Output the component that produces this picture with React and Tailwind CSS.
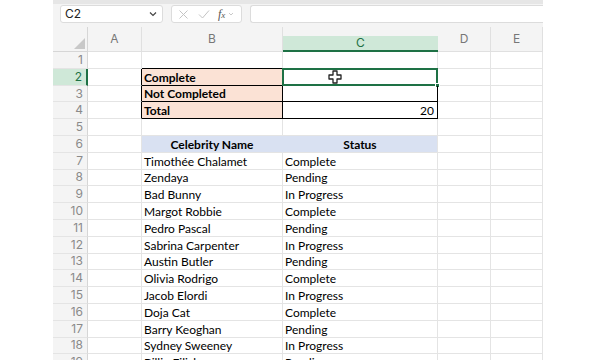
import React from "react";

const cols = ["A", "B", "C", "D", "E"];
const colW = ["w-[54px]", "w-[141px]", "w-[155px]", "w-[53px]", "w-[52px]"];

const people = [
  ["Timothée Chalamet", "Complete"],
  ["Zendaya", "Pending"],
  ["Bad Bunny", "In Progress"],
  ["Margot Robbie", "Complete"],
  ["Pedro Pascal", "Pending"],
  ["Sabrina Carpenter", "In Progress"],
  ["Austin Butler", "Pending"],
  ["Olivia Rodrigo", "Complete"],
  ["Jacob Elordi", "In Progress"],
  ["Doja Cat", "Complete"],
  ["Barry Keoghan", "Pending"],
  ["Sydney Sweeney", "In Progress"],
  ["Billie Eilish", "Pending"],
];

const grid = "border-[#e4e4e4]";

function Cell({ w, className = "", children }) {
  return (
    <div
      className={`${w} h-full shrink-0 border-r border-b ${grid} px-[2px] flex items-end leading-[15px] whitespace-nowrap overflow-hidden ${className}`}
    >
      {children}
    </div>
  );
}

function Row({ n, selected, cells }) {
  return (
    <div className="flex h-[16.8px]">
      <div
        className={`w-[35px] shrink-0 flex items-center justify-end pr-[4px] border-b border-[#e4e4e4] text-[12px] ${
          selected
            ? "bg-[#cfe8d8] text-[#1e7145] border-r-2 border-r-[#1e7145]"
            : "bg-[#f4f4f4] text-[#8a8a8a] border-r border-r-[#d6d6d6]"
        }`}
        style={{ fontFamily: "Inter, sans-serif" }}
      >
        {n}
      </div>
      {cells}
    </div>
  );
}

function Cursor() {
  return (
    <svg width="14" height="14" viewBox="0 0 14 14" className="absolute left-[45px] top-[1px]">
      <path
        d="M5 1 H9 V5 H13 V9 H9 V13 H5 V9 H1 V5 H5 Z"
        fill="#fff"
        stroke="#222"
        strokeWidth="1.3"
        strokeLinejoin="round"
      />
    </svg>
  );
}

export default function App() {
  const rows = [];
  const font = { fontFamily: "Lato, 'Open Sans', sans-serif" };

  rows.push(
    <Row
      key={1}
      n={1}
      cells={
        <>
          <Cell w={colW[0]} />
          <Cell w={colW[1]} className="border-b-black" />
          <Cell w={colW[2]} className="border-b-black" />
          <Cell w={colW[3]} />
          <Cell w={colW[4]} />
        </>
      }
    />
  );

  const labels = ["Complete", "Not Completed", "Total"];
  labels.forEach((label, i) => {
    const n = i + 2;
    rows.push(
      <Row
        key={n}
        n={n}
        selected={n === 2}
        cells={
          <>
            <Cell w={colW[0]} className="border-r-black" />
            <Cell w={colW[1]} className="bg-[#fbe2d5] border-r-black border-b-black font-bold text-black">
              {label}
            </Cell>
            <Cell w={colW[2]} className="relative overflow-visible border-r-black border-b-black justify-end pr-[3px]">
              {n === 4 ? "20" : ""}
              {n === 2 && (
                <>
                  <div className="absolute -left-px -top-px -right-px -bottom-px border-2 border-[#1e7145]" />
                  <div className="absolute -right-[3px] -bottom-[3px] w-[5px] h-[5px] bg-[#1e7145] border border-white" />
                  <Cursor />
                </>
              )}
            </Cell>
            <Cell w={colW[3]} />
            <Cell w={colW[4]} />
          </>
        }
      />
    );
  });

  rows.push(
    <Row
      key={5}
      n={5}
      cells={
        <>
          {colW.map((w, i) => (
            <Cell key={i} w={w} />
          ))}
        </>
      }
    />
  );

  rows.push(
    <Row
      key={6}
      n={6}
      cells={
        <>
          <Cell w={colW[0]} />
          <Cell w={colW[1]} className="bg-[#d9e1f2] border-r-[#d9e1f2] justify-center font-bold">
            Celebrity Name
          </Cell>
          <Cell w={colW[2]} className="bg-[#d9e1f2] justify-center font-bold">
            Status
          </Cell>
          <Cell w={colW[3]} />
          <Cell w={colW[4]} />
        </>
      }
    />
  );

  people.forEach(([name, status], i) => {
    const n = i + 7;
    rows.push(
      <Row
        key={n}
        n={n}
        cells={
          <>
            <Cell w={colW[0]} />
            <Cell w={colW[1]}>{name}</Cell>
            <Cell w={colW[2]}>{status}</Cell>
            <Cell w={colW[3]} />
            <Cell w={colW[4]} />
          </>
        }
      />
    );
  });

  return (
    <div className="w-[596px] h-[360px] bg-white overflow-hidden flex">
      <div className="w-[53px] shrink-0" />
      <div className="w-[490px] shrink-0 flex flex-col">
        {/* formula bar */}
        <div className="h-[27px] shrink-0 bg-[#f4f4f4] border-t-[4px] border-[#e6e6e6] flex items-start pt-[1px] pl-[7px] gap-[8px]">
          <div
            className="w-[103px] h-[18px] bg-white border border-[#dcdcdc] rounded-[3px] flex items-center justify-between px-[4px] text-[12px] text-[#222]"
            style={{ fontFamily: "Inter, sans-serif" }}
          >
            <span>C2</span>
            <svg width="10" height="10" viewBox="0 0 10 10">
              <path d="M2 3.5 L5 6.5 L8 3.5" fill="none" stroke="#444" strokeWidth="1.2" />
            </svg>
          </div>
          <div className="w-[71px] h-[18px] bg-white border border-[#dcdcdc] rounded-[3px] flex items-center pl-[6px] gap-[9px]">
            <svg width="11" height="11" viewBox="0 0 11 11">
              <path d="M1.5 1.5 L9.5 9.5 M9.5 1.5 L1.5 9.5" stroke="#c4c4c4" strokeWidth="1" />
            </svg>
            <svg width="12" height="11" viewBox="0 0 12 11">
              <path d="M1 5.5 L4.5 9 L11 1.5" fill="none" stroke="#c4c4c4" strokeWidth="1" />
            </svg>
            <span
              className="italic text-[12px] text-[#555] leading-none -ml-[1px]"
              style={{ fontFamily: "'Liberation Serif', serif" }}
            >
              f<span className="text-[9px]">x</span>
            </span>
            <svg width="6" height="6" viewBox="0 0 6 6" className="-ml-[6px]">
              <path d="M1 2 L3 4 L5 2" fill="none" stroke="#bbb" strokeWidth="0.8" />
            </svg>
          </div>
          <div className="flex-1 h-[18px] bg-white border-y border-l border-[#dcdcdc] rounded-l-[3px]" />
        </div>

        {/* column header */}
        <div className="h-[25px] shrink-0 flex bg-[#f4f4f4] text-[12px] text-[#777]" style={{ fontFamily: "Inter, sans-serif" }}>
          <div className="w-[35px] shrink-0 relative border-r border-b border-[#d6d6d6]">
            <svg width="11" height="11" viewBox="0 0 11 11" className="absolute right-[2px] bottom-[2px]">
              <path d="M11 0 L11 11 L0 11 Z" fill="#c8c8c8" />
            </svg>
          </div>
          {cols.map((c, i) => (
            <div
              key={c}
              className={`${colW[i]} shrink-0 flex ${
                c === "C"
                  ? "items-center justify-center bg-[#cfe8d8] text-[#1e7145] border-b-2 border-[#1e7145] mt-[9px]"
                  : "items-end justify-center pb-[3px] border-r border-b border-[#e0e0e0]"
              }`}
            >
              {c}
            </div>
          ))}
        </div>

        <div className="text-[12px] text-black" style={font}>
          {rows}
        </div>
      </div>
      <div className="flex-1" />
    </div>
  );
}
